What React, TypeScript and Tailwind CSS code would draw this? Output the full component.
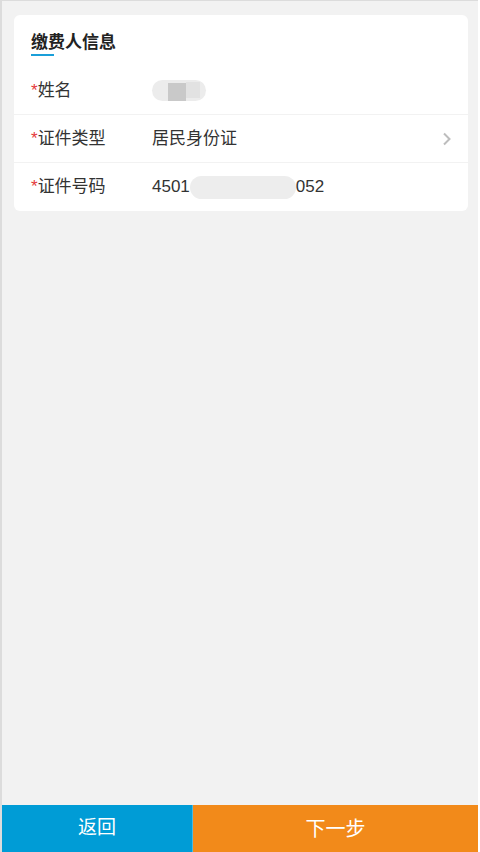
import React from 'react';

const font = { fontFamily: '"Liberation Sans", "Noto Sans CJK SC", sans-serif' };

const Label = ({ text }: { text: string }) => (
  <span className="w-[121px] shrink-0 text-[17px] text-[#333]">
    <span className="text-[#e4393c]">*</span>
    {text}
  </span>
);

const App = () => {
  return (
    <div className="w-[480px] h-[852px] bg-white" style={font}>
      <div className="w-[478px] h-[852px] flex flex-col bg-[#f2f2f2] border-l-2 border-t border-[#dcdcdc]">
        {/* payer info card */}
        <div className="mt-[14px] ml-[12px] w-[454px] bg-white rounded-[6px]">
          <div className="h-[52px] pl-[17px] pt-[16px]">
            <div className="inline-flex flex-col">
              <span className="text-[17px] leading-[20px] font-bold text-[#222]">缴费人信息</span>
              <span className="mt-[1px] w-[23px] h-[2px] bg-[#1a9fd9]"></span>
            </div>
          </div>
          <div className="h-[48px] flex items-center pl-[17px] border-b border-[#f2f2f2]">
            <Label text="姓名" />
            <div className="relative w-[54px] h-[21px] rounded-full bg-[#ececec] overflow-hidden">
              <div className="absolute left-[16px] top-[3px] w-[18px] h-[18px] bg-[#c9c9c9]"></div>
              <div className="absolute left-[34px] top-[2px] w-[14px] h-[16px] bg-[#e2e2e2]"></div>
            </div>
          </div>
          <div className="h-[48px] flex items-center pl-[17px] pr-[16px] border-b border-[#f2f2f2]">
            <Label text="证件类型" />
            <span className="flex-1 text-[17px] text-[#333]">居民身份证</span>
            <svg width="10" height="14" viewBox="0 0 10 14" fill="none">
              <path d="M2 1.5 L7.5 7 L2 12.5" stroke="#bdbdbd" strokeWidth="2" />
            </svg>
          </div>
          <div className="h-[48px] flex items-center pl-[17px]">
            <Label text="证件号码" />
            <span className="text-[17px] text-[#333]">4501</span>
            <span className="w-[106px] h-[23px] rounded-full bg-[#ededed]"></span>
            <span className="text-[17px] text-[#333]">052</span>
          </div>
        </div>

        <div className="flex-1"></div>

        {/* bottom actions */}
        <div className="h-[47px] flex">
          <button className="w-[191px] h-full bg-[#009cd6] text-white text-[19px] border-r border-[#4bb8e0]">返回</button>
          <button className="flex-1 h-full bg-[#f28a1a] text-white text-[20px]">下一步</button>
        </div>
      </div>
    </div>
  );
};

export default App;
